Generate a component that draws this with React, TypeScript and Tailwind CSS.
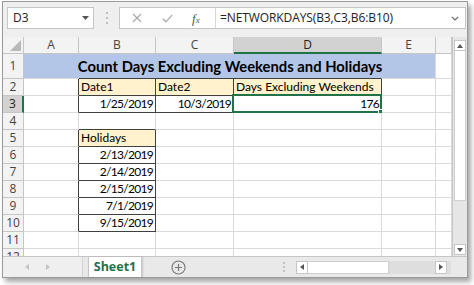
import type { ReactNode } from 'react';

// gridline / border presets
const gridC = 'border-r border-b border-[#dadada] bg-white';
const darkR = 'border-r border-b border-r-[#404040] border-b-[#dadada] bg-white';
const darkB = 'border-r border-b border-r-[#dadada] border-b-[#404040] bg-white';
const boxed = 'border-r border-b border-[#404040] bg-white';
const boxedYellow = 'border-r border-b border-[#404040] bg-[#fff2cc]';

type Cell = { cls: string; text?: ReactNode; right?: boolean; selected?: boolean };

const cols = ['A', 'B', 'C', 'D', 'E', ''];

const holidays = ['2/13/2019', '2/14/2019', '2/15/2019', '7/1/2019', '9/15/2019'];

function plainRow(): Cell[] {
  return [{ cls: gridC }, { cls: gridC }, { cls: gridC }, { cls: gridC }, { cls: gridC }, { cls: gridC }];
}

const rows: { n: number; cells: Cell[] }[] = [
  {
    n: 2,
    cells: [
      { cls: darkR },
      { cls: boxedYellow, text: 'Date1' },
      { cls: boxedYellow, text: 'Date2' },
      { cls: boxedYellow, text: 'Days Excluding Weekends' },
      { cls: gridC },
      { cls: gridC },
    ],
  },
  {
    n: 3,
    cells: [
      { cls: darkR },
      { cls: boxed, text: '1/25/2019', right: true },
      { cls: boxed, text: '10/3/2019', right: true },
      { cls: boxed, text: '176', right: true, selected: true },
      { cls: gridC },
      { cls: gridC },
    ],
  },
  {
    n: 4,
    cells: [{ cls: gridC }, { cls: darkB }, { cls: gridC }, { cls: gridC }, { cls: gridC }, { cls: gridC }],
  },
  {
    n: 5,
    cells: [
      { cls: darkR },
      { cls: boxedYellow, text: 'Holidays' },
      { cls: gridC },
      { cls: gridC },
      { cls: gridC },
      { cls: gridC },
    ],
  },
  ...holidays.map((d, i) => ({
    n: 6 + i,
    cells: [
      { cls: darkR },
      { cls: boxed, text: d, right: true },
      { cls: gridC },
      { cls: gridC },
      { cls: gridC },
      { cls: gridC },
    ],
  })),
  { n: 11, cells: plainRow() },
  { n: 12, cells: plainRow() },
];

function RowHead({ n, active }: { n: number; active?: boolean }) {
  return (
    <div
      className={
        active
          ? "flex items-center justify-center bg-[#d2d2d2] border-b border-b-[#c6c6c6] border-r-2 border-r-[#217346] font-['Open_Sans',sans-serif] text-[12px] text-[#222]"
          : "flex items-center justify-center bg-[#f3f3f3] border-b border-r border-[#c6c6c6] font-['Open_Sans',sans-serif] text-[12px] text-[#444]"
      }
    >
      {n}
    </div>
  );
}

function FormulaBar() {
  return (
    <div className="h-[35px] flex items-start pt-[5px] pl-[4px] pr-[1px] bg-[#efefef] font-['Open_Sans',sans-serif]">
      {/* name box */}
      <div className="w-[87px] h-[22px] bg-white border border-[#c6c6c6] flex items-center pl-[5px] pr-[4px] text-[12px] text-[#222]">
        <span className="flex-1">D3</span>
        <svg width="7" height="4" viewBox="0 0 7 4">
          <path d="M0 0 L7 0 L3.5 4 Z" fill="#555" />
        </svg>
      </div>
      {/* grip dots */}
      <div className="w-[25px] h-[22px] flex items-center justify-center">
        <svg width="2" height="12" viewBox="0 0 2 12">
          <circle cx="1" cy="1" r="1" fill="#b0b0b0" />
          <circle cx="1" cy="6" r="1" fill="#b0b0b0" />
          <circle cx="1" cy="11" r="1" fill="#b0b0b0" />
        </svg>
      </div>
      {/* icons + formula */}
      <div className="flex-1 h-[22px] bg-white border border-[#c6c6c6] flex items-center">
        <div className="w-[96px] h-full flex items-center border-r border-[#d6d6d6]">
          <svg className="ml-[12px]" width="10" height="10" viewBox="0 0 10 10">
            <path d="M1 1 L9 9 M9 1 L1 9" stroke="#a8a8a8" strokeWidth="1.2" />
          </svg>
          <svg className="ml-[20px]" width="11" height="9" viewBox="0 0 11 9">
            <path d="M0.8 4.8 L4 7.8 L10.2 0.8" stroke="#a8a8a8" strokeWidth="1.2" fill="none" />
          </svg>
          <span className="ml-[19px] font-['Liberation_Serif',serif] italic text-[13px] text-[#555] leading-none">
            f<span className="text-[9px]">x</span>
          </span>
        </div>
        <span className="flex-1 pl-[4px] text-[12px] text-[#222] tracking-[-0.1px]">=NETWORKDAYS(B3,C3,B6:B10)</span>
        <svg className="mr-[6px]" width="8" height="5" viewBox="0 0 8 5">
          <path d="M0.8 0.8 L4 4 L7.2 0.8" stroke="#666" strokeWidth="1.2" fill="none" />
        </svg>
      </div>
    </div>
  );
}

function Grid() {
  return (
    <div className="h-[219px] overflow-hidden font-['Lato',sans-serif] text-[12px] text-black">
      <div className="grid grid-cols-[21px_55px_77px_78px_148px_54px_16px] grid-rows-[17px_25px_repeat(11,17px)]">
        {/* corner */}
        <div className="bg-[#f3f3f3] border-r border-b border-[#c6c6c6] flex items-end justify-end pr-[2px] pb-[2px]">
          <svg width="11" height="11" viewBox="0 0 11 11">
            <path d="M11 0 L11 11 L0 11 Z" fill="#b9b9b9" />
          </svg>
        </div>
        {cols.map((c, i) =>
          c === 'D' ? (
            <div
              key={i}
              className="flex items-center justify-center bg-[#d2d2d2] border-r border-r-[#c6c6c6] border-b-2 border-b-[#217346] font-['Open_Sans',sans-serif] text-[12px] text-[#222]"
            >
              {c}
            </div>
          ) : (
            <div
              key={i}
              className="flex items-center justify-center bg-[#f3f3f3] border-r border-b border-[#c6c6c6] font-['Open_Sans',sans-serif] text-[12px] text-[#444]"
            >
              {c}
            </div>
          ),
        )}

        {/* row 1 - title, merged B1:D1 */}
        <RowHead n={1} />
        <div className="bg-[#b4c6e7] border-r border-b border-r-[#b4c6e7] border-b-[#dadada]" />
        <div className="col-span-3 relative z-10 bg-[#b4c6e7] border-r border-b border-r-[#b4c6e7] border-b-[#404040] flex items-end justify-center pb-[4px] whitespace-nowrap font-bold text-[14.8px] leading-none">
          Count Days Excluding Weekends and Holidays
        </div>
        <div className="bg-[#b4c6e7] border-r border-b border-[#dadada]" />
        <div className={gridC} />

        {rows.map(r => (
          <Row key={r.n} n={r.n} cells={r.cells} />
        ))}
      </div>
    </div>
  );
}

function Row({ n, cells }: { n: number; cells: Cell[] }) {
  return (
    <>
      <RowHead n={n} active={n === 3} />
      {cells.map((c, i) => (
        <div
          key={i}
          className={`${c.cls} relative flex items-center px-[2px] whitespace-nowrap ${c.right ? 'justify-end tracking-[-0.7px]' : 'justify-start'}`}
        >
          {c.text}
          {c.selected && (
            <div className="absolute -left-[2px] -top-[2px] -right-[1px] -bottom-[1px] border-2 border-[#217346]">
              <div className="absolute -right-[4px] -bottom-[4px] w-[6px] h-[6px] bg-[#217346] border border-white" />
            </div>
          )}
        </div>
      ))}
    </>
  );
}

function VScroll() {
  return (
    <div className="w-[15px] h-[219px] bg-[#e6e6e6] border-l border-[#c6c6c6] flex flex-col items-center">
      <div className="mt-[3px] w-[12px] h-[11px] bg-white border border-[#c6c6c6] flex items-center justify-center">
        <svg width="6" height="4" viewBox="0 0 6 4">
          <path d="M0 4 L6 4 L3 0 Z" fill="#555" />
        </svg>
      </div>
      <div className="w-[12px] h-[150px] bg-white border-x border-b border-[#d0d0d0]" />
      <div className="flex-1" />
      <div className="mb-[1px] w-[12px] h-[11px] bg-white border border-[#c6c6c6] flex items-center justify-center">
        <svg width="6" height="4" viewBox="0 0 6 4">
          <path d="M0 0 L6 0 L3 4 Z" fill="#555" />
        </svg>
      </div>
    </div>
  );
}

function TabBar() {
  return (
    <div className="h-[21px] flex items-stretch bg-[#e9e9e9] border-t border-[#c6c6c6] font-['Open_Sans',sans-serif]">
      <div className="w-[80px] flex items-center gap-[17px] pl-[22px] bg-[#efefef] border-r border-[#d4d4d4]">
        <svg width="4" height="6" viewBox="0 0 4 6">
          <path d="M4 0 L4 6 L0 3 Z" fill="#c4c4c4" />
        </svg>
        <svg width="4" height="6" viewBox="0 0 4 6">
          <path d="M0 0 L0 6 L4 3 Z" fill="#c4c4c4" />
        </svg>
      </div>
      <div className="ml-[5px] w-[54px] bg-white border-x border-[#c6c6c6] flex items-center justify-center text-[12.5px] font-bold text-[#217346] shadow-[1px_0_2px_rgba(0,0,0,0.15)]">
        Sheet1
      </div>
      <div className="w-[72px] flex items-center justify-center">
        <svg width="15" height="15" viewBox="0 0 15 15">
          <circle cx="7.5" cy="7.5" r="6.5" stroke="#777" strokeWidth="1.1" fill="none" />
          <path d="M7.5 4 V11 M4 7.5 H11" stroke="#777" strokeWidth="1.2" />
        </svg>
      </div>
      <div className="flex-1 flex items-center justify-end pr-[11px]">
        <svg width="2" height="10" viewBox="0 0 2 10">
          <circle cx="1" cy="1" r="0.9" fill="#b0b0b0" />
          <circle cx="1" cy="5" r="0.9" fill="#b0b0b0" />
          <circle cx="1" cy="9" r="0.9" fill="#b0b0b0" />
        </svg>
      </div>
      {/* horizontal scrollbar */}
      <div className="w-[155px] flex items-center mr-[16px]">
        <div className="w-[12px] h-[13px] bg-white border border-[#c6c6c6] flex items-center justify-center">
          <svg width="4" height="6" viewBox="0 0 4 6">
            <path d="M4 0 L4 6 L0 3 Z" fill="#555" />
          </svg>
        </div>
        <div className="w-[81px] h-[13px] bg-white border-y border-r border-[#d0d0d0]" />
        <div className="flex-1 h-[13px] bg-[#dedede]" />
        <div className="w-[12px] h-[13px] bg-white border border-[#c6c6c6] flex items-center justify-center">
          <svg width="4" height="6" viewBox="0 0 4 6">
            <path d="M0 0 L0 6 L4 3 Z" fill="#555" />
          </svg>
        </div>
        <div className="w-[4px] h-[13px] bg-[#dedede]" />
      </div>
    </div>
  );
}

export default function App() {
  return (
    <div className="w-[474px] h-[285px] bg-white overflow-hidden pt-[1px] pl-[2px]">
      <div className="w-[466px] h-[277px] border border-[#9a9a9a] bg-[#efefef] flex flex-col shadow-[3px_4px_5px_rgba(0,0,0,0.35)]">
        <FormulaBar />
        <div className="flex">
          <Grid />
          <VScroll />
        </div>
        <TabBar />
      </div>
    </div>
  );
}
